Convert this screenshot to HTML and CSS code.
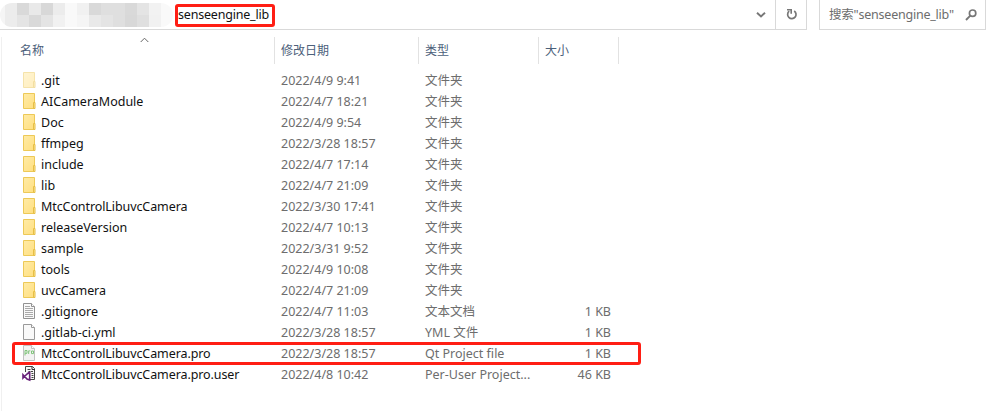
FILE: index.html
```
<!DOCTYPE html>
<html lang="zh-CN">
<head>
<meta charset="utf-8">
<title>senseengine_lib</title>
<link rel="stylesheet" href="styles.css">
</head>
<body>
<svg class="defs" width="0" height="0" aria-hidden="true">
  <defs>
    <linearGradient id="fold" x1="0" y1="0" x2="1" y2="1"><stop offset="0" stop-color="#ffeba6"/><stop offset="1" stop-color="#ffdf80"/></linearGradient>
    <symbol id="folder" viewBox="0 0 16 16"><path d="M1.500.5h11v15h-11z" fill="url(#fold)" stroke="#edc957"/><path d="M11.500 9.500h1.500v6h-1.500z" fill="#ffe698" stroke="#e6bf46"/></symbol>
    <symbol id="page" viewBox="0 0 16 16"><path d="M1.500.5h8l3 3v12h-11z" fill="#f9f9f9" stroke="#9a9a9a"/><path d="M9.500.5v3h3" fill="#fff" stroke="#9a9a9a"/></symbol>
    <symbol id="text" viewBox="0 0 16 16"><path d="M1.500.5h8l3 3v12h-11z" fill="#f9f9f9" stroke="#929292"/><path d="M9.500.5v3h3" fill="#fff" stroke="#929292"/><path d="M3 3.500h5M3 5.500h8M3 7.500h8M3 9.500h8M3 11.500h8M3 13.500h8" stroke="#aaa"/></symbol>
    <symbol id="pro" viewBox="0 0 16 16"><path d="M1.500.5h8l3 3v12h-11z" fill="#f3f3f3" stroke="#c2c2c2"/><path d="M9.500.5v3h3" fill="#fff" stroke="#c2c2c2"/><path d="M3 10.500v-5h2v2.800H3M6.700 9V5.500M6.700 6.500q.5-.9 1.600-.7M9.500 6h2v2.600h-2z" fill="none" stroke="#7fc47a"/></symbol>
    <symbol id="user" viewBox="0 0 16 16"><path d="M3.500 6V.5h7l2 2v11H8" fill="#f8f8f8" stroke="#444"/><path d="M10 .5v3h3" fill="none" stroke="#333"/><path d="M5.500 3.500h3M6.500 5.500h2M9 5.500h2M9.500 7.500h2M9.500 9.500h2M9.500 11.500h2" stroke="#444"/><path d="M7.700 6v8L5 13 1 8.700V12l4-4L7.700 6" fill="none" stroke="#68217a" stroke-width="1.600"/></symbol>
  </defs>
</svg>
<div class="window">
  <header class="toolbar">
    <div class="address">
      <div class="mosaic"><i class="f4"></i><i class="ec"></i><i class="d9"></i><i class="e9"></i><i class="d8"></i><i class="ec"></i><i class="f6"></i><i class="f1"></i><i class="d9"></i><i class="df"></i><i class="df"></i><i class="d9"></i><i class="e4"></i><i class="f2"></i><i class="f6"></i><i class="f4"></i><i class="ec"></i><i class="e4"></i><i class="d9"></i><i class="e4"></i><i class="f1"></i><i class="f6"></i><i class="f4"></i><i class="e9"></i><i class="e4"></i><i class="df"></i><i class="d8"></i><i class="df"></i><i class="f1"></i><i class="f6"></i></div>
      <div class="crumb"><span>senseengine_lib</span></div>
      <svg class="chev" width="10" height="8" viewBox="0 0 10 8"><path d="M1 1.700l4 3.800 4-3.800" fill="none" stroke="#777" stroke-width="1.900"/></svg>
    </div>
    <div class="refresh"><svg width="12" height="12" viewBox="0 0 12 12"><path d="M8.200 3A4.200 4.200 0 1 1 3.200 3.200" fill="none" stroke="#777" stroke-width="1.700"/><path d="M1 1.700h4.200v4" fill="none" stroke="#777" stroke-width="1.600"/></svg></div>
    <div class="search"><span>搜索"senseengine_lib"</span><svg width="12" height="12" viewBox="0 0 12 12"><circle cx="7.600" cy="4.200" r="3.200" fill="none" stroke="#777" stroke-width="1.700"/><path d="M5.300 6.600L1 11" stroke="#777" stroke-width="1.900"/></svg></div>
  </header>
  <main class="list">
    <div class="head">
      <div class="hname"><span>名称</span><svg class="sort" width="9" height="6" viewBox="0 0 9 6"><path d="M.7 5l3.800-3.800L8.300 5" fill="none" stroke="#666"/></svg></div>
      <div>修改日期</div><div>类型</div><div>大小</div>
    </div>
    <div class="rows">
      <div class="row faded"><svg class="ico"><use href="#folder"/></svg><b>.git</b><span>2022/4/9 9:41</span><span>文件夹</span></div>
      <div class="row"><svg class="ico"><use href="#folder"/></svg><b>AICameraModule</b><span>2022/4/7 18:21</span><span>文件夹</span></div>
      <div class="row"><svg class="ico"><use href="#folder"/></svg><b>Doc</b><span>2022/4/9 9:54</span><span>文件夹</span></div>
      <div class="row"><svg class="ico"><use href="#folder"/></svg><b>ffmpeg</b><span>2022/3/28 18:57</span><span>文件夹</span></div>
      <div class="row"><svg class="ico"><use href="#folder"/></svg><b>include</b><span>2022/4/7 17:14</span><span>文件夹</span></div>
      <div class="row"><svg class="ico"><use href="#folder"/></svg><b>lib</b><span>2022/4/7 21:09</span><span>文件夹</span></div>
      <div class="row"><svg class="ico"><use href="#folder"/></svg><b class="long">MtcControlLibuvcCamera</b><span>2022/3/30 17:41</span><span>文件夹</span></div>
      <div class="row"><svg class="ico"><use href="#folder"/></svg><b>releaseVersion</b><span>2022/4/7 10:13</span><span>文件夹</span></div>
      <div class="row"><svg class="ico"><use href="#folder"/></svg><b>sample</b><span>2022/3/31 9:52</span><span>文件夹</span></div>
      <div class="row"><svg class="ico"><use href="#folder"/></svg><b>tools</b><span>2022/4/9 10:08</span><span>文件夹</span></div>
      <div class="row"><svg class="ico"><use href="#folder"/></svg><b class="long">uvcCamera</b><span>2022/4/7 21:09</span><span>文件夹</span></div>
      <div class="row"><svg class="ico"><use href="#text"/></svg><b>.gitignore</b><span>2022/4/7 11:03</span><span>文本文档</span><em>1 KB</em></div>
      <div class="row"><svg class="ico"><use href="#page"/></svg><b>.gitlab-ci.yml</b><span>2022/3/28 18:57</span><span>YML 文件</span><em>1 KB</em></div>
      <div class="row marked"><svg class="ico"><use href="#pro"/></svg><b class="long">MtcControlLibuvcCamera.pro</b><span>2022/3/28 18:57</span><span>Qt Project file</span><em>1 KB</em></div>
      <div class="row"><svg class="ico"><use href="#user"/></svg><b class="long">MtcControlLibuvcCamera.pro.user</b><span>2022/4/8 10:42</span><span>Per-User Project...</span><em>46 KB</em></div>
    </div>
  </main>
</div>
</body>
</html>
```
FILE: styles.css
```
*, *::after { box-sizing: border-box; }
body { margin: 0; background: #fff; font: 12.5px/21px "Noto Sans", "Noto Sans CJK SC", sans-serif; color: #111; overflow: hidden; }
svg { display: block; flex: none; }
.defs { position: absolute; }
.window { width: 998px; height: 411px; display: flex; flex-direction: column; }
.toolbar { display: flex; height: 30px; flex: none; }
.address { width: 776px; display: flex; border: solid #d9d9d9; border-width: 0 1px 1px 0; }
.mosaic { width: 173px; height: 24px; margin-top: 3px; display: grid; grid-template-columns: 5px repeat(13, 12px) 12px; grid-template-rows: 12px 12px; border-radius: 12px; overflow: hidden; }
.f6 { background: #f9f9f9; } .f4 { background: #f5f5f5; } .f2 { background: #f2f2f2; } .f1 { background: #f1f1f1; }
.ec { background: #ececec; } .e9 { background: #e9e9e9; } .e4 { background: #e4e4e4; }
.df { background: #dfdfdf; } .d9 { background: #d9d9d9; } .d8 { background: #d8d8d8; }
.crumb { width: 100px; height: 23px; margin: 4px 0 0 2px; border: 3px solid #ff1e14; border-radius: 3px; line-height: 15px; letter-spacing: -.2px; }
.chev { margin: 11px 9px 0 auto; }
.refresh { width: 31px; border: solid #d9d9d9; border-width: 0 1px 1px 0; padding: 8px 0 0 10px; }
.search { width: 167px; margin-left: 12px; border: 1px solid #d9d9d9; border-top: 0; display: flex; justify-content: space-between; padding: 5px 8px 0 9px; color: #6d6d6d; line-height: 19px; letter-spacing: -.22px; }
.search svg { margin-top: 4px; }
.list { flex: 1; margin: 7px 0 0 1px; border-left: 1px solid #f0f0f0; }
.head { display: grid; grid-template-columns: 273px 144px 120px 80px; height: 27px; line-height: 27px; color: #4c607a; font-size: 12px; }
.head > div { border-right: 1px solid #e2e2e2; padding-left: 6px; }
.head .hname { padding-left: 18px; display: flex; }
.sort { margin-left: 96px; }
.rows { padding: 6px 0 0 19px; }
.row { display: grid; grid-template-columns: 20px 240px 144px 120px 66px; height: 21px; color: #6d6d6d; white-space: nowrap; }
.row b { font-weight: 400; color: #111; }
.row .long { letter-spacing: -.09px; }
.row em { font-style: normal; text-align: right; }
.ico { width: 16px; height: 16px; margin: 2px 0 0 1px; }
.faded .ico { opacity: .5; }
.marked { position: relative; }
.marked::after { content: ""; position: absolute; left: -9px; top: -1px; width: 629px; height: 23px; border: 3px solid #ff1e14; border-radius: 3px; }
```
